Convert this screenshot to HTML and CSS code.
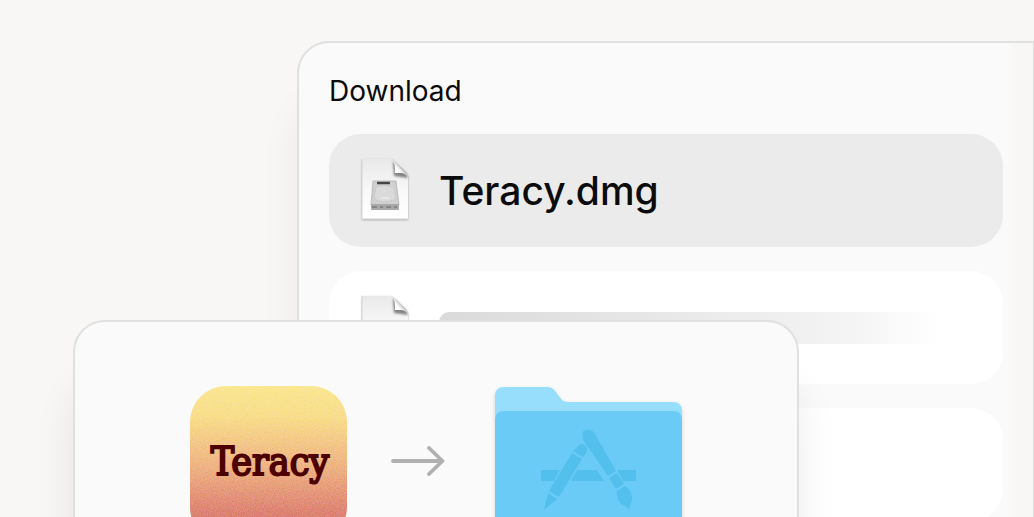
FILE: index.html
```
<!DOCTYPE html>
<html lang="en">
	<head>
		<meta charset="utf-8">
		<title>Install Teracy</title>
		<link rel="stylesheet" href="styles.css">
	</head>
	<body>
		<svg width="0" height="0" class="defs" aria-hidden="true">
			<defs>
				<linearGradient id="paper" x1="0" y1="0" x2="0" y2="1">
					<stop offset="0" stop-color="#e9e9e9" />
					<stop offset="0.5" stop-color="#f8f8f8" />
					<stop offset="1" stop-color="#ffffff" />
				</linearGradient>
				<linearGradient id="fold" x1="0" y1="1" x2="1" y2="0">
					<stop offset="0" stop-color="#ffffff" />
					<stop offset="0.5" stop-color="#e4e4e4" />
					<stop offset="1" stop-color="#cccccc" />
				</linearGradient>
				<filter id="soft" x="-30%" y="-30%" width="160%" height="160%">
					<feGaussianBlur stdDeviation="1.2" />
				</filter>
				<symbol id="page" viewBox="0 0 54 68">
					<path d="M3 3H33L49 20V63H3Z" fill="#000" opacity="0.3" filter="url(#soft)" />
					<path d="M3 2H33L49 19V62H3Z" fill="url(#paper)" />
					<path d="M3 2V62H49" fill="none" stroke="#d4d4d4" />
					<path d="M34 4L35 19L49 21L47 16Z" fill="#555" opacity="0.7" filter="url(#soft)" />
					<path d="M33 2C36 6 36 11 36 16C41 15 46 16 49 19Z" fill="url(#fold)" />
					<path d="M36 8V16H43Z" fill="#fff" />
				</symbol>
			</defs>
		</svg>

		<main class="desktop">
			<section class="window downloads">
				<h1 class="title">Download</h1>
				<ul class="files">
					<li class="file selected">
						<svg class="file-icon" viewBox="0 0 54 68" aria-hidden="true">
							<use href="#page" />
							<path d="M14 24H37L40 48H12Z" fill="#d0d0d0" stroke="#bcbcbc" />
							<path d="M17 30C24 28 30 28 35 31L37 41C32 46 20 46 15 41Z" fill="#dadada" stroke="#cacaca" />
							<path d="M12 47H40V52Q40 53 39 53H13Q12 53 12 52Z" fill="#a8a8a8" />
							<path d="M13 50H18M21 50H24M27 50H32M35 50H38" stroke="#858585" stroke-width="2" />
							<path d="M18 26H31" stroke="#444" stroke-width="2.5" />
							<path d="M22 41H30" stroke="#efefef" />
						</svg>
						<span class="file-name">Teracy.dmg</span>
					</li>
					<li class="file">
						<svg class="file-icon" viewBox="0 0 54 68" aria-hidden="true">
							<use href="#page" />
						</svg>
						<span class="placeholder"></span>
					</li>
					<li class="file"></li>
				</ul>
			</section>

			<section class="window installer">
				<svg class="app-icon" viewBox="0 0 157 157" role="img" aria-label="Teracy">
					<defs>
						<linearGradient id="sunset" x1="0" y1="0" x2="0" y2="1">
							<stop offset="0" stop-color="#fae68e" />
							<stop offset="0.2" stop-color="#f8dc88" />
							<stop offset="0.5" stop-color="#efb380" />
							<stop offset="0.8" stop-color="#dd8070" />
							<stop offset="1" stop-color="#cc6e64" />
						</linearGradient>
						<filter id="grain" x="0" y="0" width="100%" height="100%" color-interpolation-filters="sRGB">
							<feTurbulence type="fractalNoise" baseFrequency="0.9" numOctaves="3" seed="4" />
							<feColorMatrix values="1.2 0 0 0 -0.02  0 1.2 0 0 -0.02  0 0 1.2 0 -0.02  0 0 0 0 1" />
						</filter>
						<clipPath id="tile">
							<rect width="157" height="157" rx="36" />
						</clipPath>
					</defs>
					<g clip-path="url(#tile)">
						<rect width="157" height="157" fill="url(#sunset)" />
						<rect class="grain" width="157" height="157" filter="url(#grain)" />
					</g>
					<text class="app-name" x="80" y="89" text-anchor="middle">Teracy</text>
				</svg>

				<svg class="arrow" viewBox="0 0 54 32" aria-hidden="true">
					<path d="M2 16H51M38 3L51.500 16L38 29" fill="none" stroke="#b0b0b0" stroke-width="3.800" stroke-linecap="round" stroke-linejoin="round" />
				</svg>

				<svg class="folder" viewBox="0 0 188 156" role="img" aria-label="Applications">
					<path d="M0 156V10Q0 1 9 1H53Q57 1 60 5L67 14Q69 16 73 16H178Q187 16 187 25V156Z" fill="#97defd" />
					<path d="M0 156V34Q0 25 9 25H178Q187 25 187 34V156Z" fill="#6bcbf7" />
					<g fill="#53bfec">
						<path d="M46 84H65L59 95H46ZM82 84H102L109 95H76ZM122 84H141V95H128Z" />
						<path d="M88 50Q86 44 92 44Q97 43 100 48L121 85L113 90L88 54Z" />
						<path d="M114 92L122 87L129 98L121 103ZM122 105L130 100Q138 105 137 114L134 124Q131 119 126 118Q121 113 122 105Z" />
						<path d="M82 61Q85 56 90 59Q94 62 91 67L88 71L78 65ZM77 67L87 73L64 111L54 105ZM53 107L62 113L49 124Z" />
					</g>
				</svg>
			</section>
		</main>
	</body>
</html>
```
FILE: styles.css
```
* {
	box-sizing: border-box;
}

body {
	margin: 0;
	background: #f8f7f5;
	color: #0b0b0b;
	font-family: Inter, "Liberation Sans", sans-serif;
}

.defs {
	position: absolute;
}

.desktop {
	position: relative;
	height: 100vh;
	padding: 41px 0 0 297px;
	overflow: hidden;
}

.window {
	border: 2px solid #dfe0e0;
	border-radius: 32px;
	background: #fafafa;
	box-shadow: 0 64px 40px rgba(0, 0, 0, 0.06);
}

.downloads {
	padding: 30px;
	border-right-width: 1px;
	border-top-right-radius: 0;
	background: linear-gradient(to left, #f8f7f5 16px, #fafafa 24px);
}

.title {
	margin: 0 0 24px;
	font-size: 28px;
	font-weight: 400;
	line-height: 37px;
}

.files {
	display: flex;
	flex-direction: column;
	gap: 24px;
	margin: 0;
	padding: 0;
	list-style: none;
}

.file {
	display: flex;
	align-items: center;
	gap: 26px;
	height: 113px;
	padding: 0 30px;
	border-radius: 32px;
	background: #fff;
}

.selected {
	background: #ebebeb;
}

.file-icon {
	width: 54px;
	height: 68px;
}

.file-name {
	font-size: 39px;
	font-weight: 500;
}

.placeholder {
	flex: 1;
	height: 32px;
	border-radius: 10px;
	background: linear-gradient(to right, #dadada, #f3f3f3 75%, #fff 94%);
}

.installer {
	position: absolute;
	top: 320px;
	left: 73px;
	display: flex;
	align-items: flex-start;
	width: 726px;
	padding: 64px 114px;
	padding-left: 115px;
	box-shadow: 0 64px 40px rgba(0, 0, 0, 0.08);
}

.app-icon {
	width: 157px;
	height: 157px;
}

.grain {
	mix-blend-mode: soft-light;
	opacity: 0.5;
}

.app-name {
	fill: #4d0000;
	stroke: #4d0000;
	stroke-width: 2px;
	font-family: "DejaVu Serif Condensed", "DejaVu Serif", serif;
	font-size: 39px;
}

.arrow {
	width: 54px;
	height: 32px;
	margin: 59px auto 0 44px;
}

.folder {
	width: 188px;
	height: 156px;
	filter: drop-shadow(0 2px 2px rgba(0, 0, 0, 0.15));
}
```
